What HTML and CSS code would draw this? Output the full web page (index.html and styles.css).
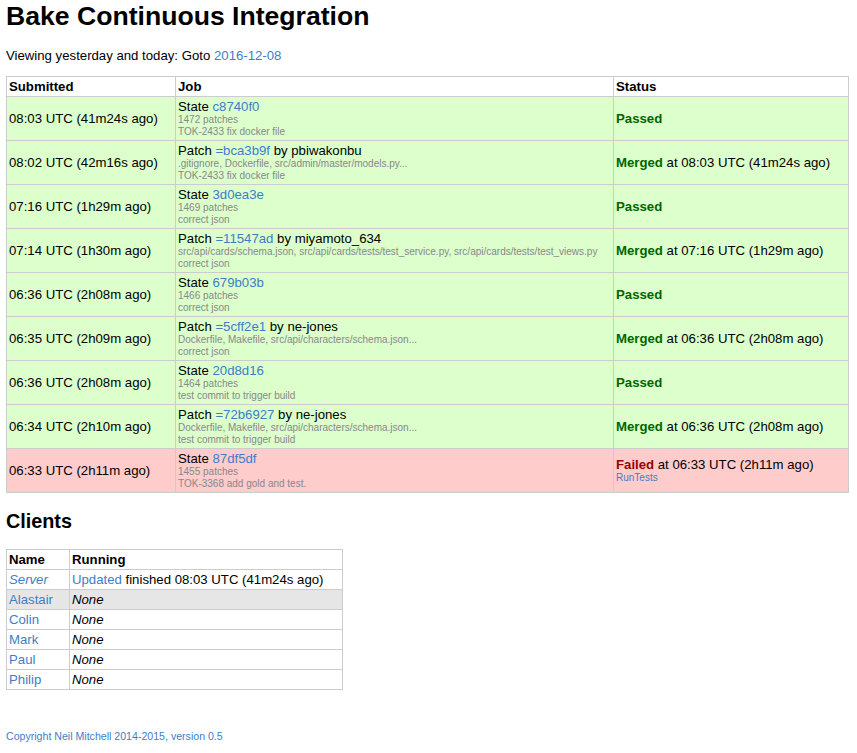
FILE: index.html
```html
<!DOCTYPE html>
<html>
<head>
<meta charset="utf-8">
<title>Bake Continuous Integration</title>
<link rel="stylesheet" href="styles.css">
</head>
<body>
<h1 class="title">Bake Continuous Integration</h1>
<p class="nav">Viewing yesterday and today: Goto <a href="#">2016-12-08</a></p>
<table class="grid builds">
  <colgroup>
    <col class="c-sub">
    <col class="c-job">
    <col class="c-status">
  </colgroup>
  <thead>
    <tr><th>Submitted</th><th>Job</th><th>Status</th></tr>
  </thead>
  <tbody>
    <tr class="pass">
      <td class="mid">08:03 UTC (41m24s ago)</td>
      <td>State <a href="#">c8740f0</a><div class="small">1472 patches</div><div class="small">TOK-2433 fix docker file</div></td>
      <td class="mid"><span class="ok">Passed</span></td>
    </tr>
    <tr class="pass">
      <td class="mid">08:02 UTC (42m16s ago)</td>
      <td>Patch <a href="#">=bca3b9f</a> by pbiwakonbu<div class="small">.gitignore, Dockerfile, src/admin/master/models.py...</div><div class="small">TOK-2433 fix docker file</div></td>
      <td class="mid"><span class="ok">Merged</span> at 08:03 UTC (41m24s ago)</td>
    </tr>
    <tr class="pass">
      <td class="mid">07:16 UTC (1h29m ago)</td>
      <td>State <a href="#">3d0ea3e</a><div class="small">1469 patches</div><div class="small">correct json</div></td>
      <td class="mid"><span class="ok">Passed</span></td>
    </tr>
    <tr class="pass">
      <td class="mid">07:14 UTC (1h30m ago)</td>
      <td>Patch <a href="#">=11547ad</a> by miyamoto_634<div class="small">src/api/cards/schema.json, src/api/cards/tests/test_service.py, src/api/cards/tests/test_views.py</div><div class="small">correct json</div></td>
      <td class="mid"><span class="ok">Merged</span> at 07:16 UTC (1h29m ago)</td>
    </tr>
    <tr class="pass">
      <td class="mid">06:36 UTC (2h08m ago)</td>
      <td>State <a href="#">679b03b</a><div class="small">1466 patches</div><div class="small">correct json</div></td>
      <td class="mid"><span class="ok">Passed</span></td>
    </tr>
    <tr class="pass">
      <td class="mid">06:35 UTC (2h09m ago)</td>
      <td>Patch <a href="#">=5cff2e1</a> by ne-jones<div class="small">Dockerfile, Makefile, src/api/characters/schema.json...</div><div class="small">correct json</div></td>
      <td class="mid"><span class="ok">Merged</span> at 06:36 UTC (2h08m ago)</td>
    </tr>
    <tr class="pass">
      <td class="mid">06:36 UTC (2h08m ago)</td>
      <td>State <a href="#">20d8d16</a><div class="small">1464 patches</div><div class="small">test commit to trigger build</div></td>
      <td class="mid"><span class="ok">Passed</span></td>
    </tr>
    <tr class="pass">
      <td class="mid">06:34 UTC (2h10m ago)</td>
      <td>Patch <a href="#">=72b6927</a> by ne-jones<div class="small">Dockerfile, Makefile, src/api/characters/schema.json...</div><div class="small">test commit to trigger build</div></td>
      <td class="mid"><span class="ok">Merged</span> at 06:36 UTC (2h08m ago)</td>
    </tr>
    <tr class="fail">
      <td class="mid">06:33 UTC (2h11m ago)</td>
      <td>State <a href="#">87df5df</a><div class="small">1455 patches</div><div class="small">TOK-3368 add gold and test.</div></td>
      <td class="mid"><span class="bad">Failed</span> at 06:33 UTC (2h11m ago)<div class="small"><a href="#">RunTests</a></div></td>
    </tr>
  </tbody>
</table>

<h2 class="section">Clients</h2>
<table class="grid clients">
  <colgroup>
    <col class="c-name">
    <col class="c-run">
  </colgroup>
  <thead>
    <tr><th>Name</th><th>Running</th></tr>
  </thead>
  <tbody>
    <tr><td><a href="#" class="it">Server</a></td><td><a href="#">Updated</a> finished 08:03 UTC (41m24s ago)</td></tr>
    <tr class="hl"><td><a href="#">Alastair</a></td><td class="it">None</td></tr>
    <tr><td><a href="#">Colin</a></td><td class="it">None</td></tr>
    <tr><td><a href="#">Mark</a></td><td class="it">None</td></tr>
    <tr><td><a href="#">Paul</a></td><td class="it">None</td></tr>
    <tr><td><a href="#">Philip</a></td><td class="it">None</td></tr>
  </tbody>
</table>

<p class="footer"><a href="#">Copyright Neil Mitchell 2014-2015, version 0.5</a></p>
</body>
</html>
```

FILE: styles.css
```css
html, body {
  margin: 0;
  padding: 0;
}
body {
  padding: 0 8px 0 6px;
  font-family: "Liberation Sans", Arial, Helvetica, sans-serif;
  font-size: 13.2px;
  color: #000;
  background: #fff;
}
a {
  color: #3f7dc8;
  text-decoration: none;
}
.title {
  font-size: 26.6px;
  line-height: 30px;
  font-weight: bold;
  margin: 1px 0 17px 0;
}
.nav {
  line-height: 15px;
  margin: 13px 0 13px 0;
}
.grid {
  border-collapse: collapse;
  table-layout: fixed;
}
.grid th,
.grid td {
  border: 1px solid #cccccc;
  padding: 2px 2px;
  text-align: left;
  vertical-align: top;
  line-height: 15px;
}
.grid th {
  font-weight: bold;
  background: #fff;
}
.builds {
  width: 842px;
}
.c-sub { width: 169px; }
.c-job { width: 438px; }
.c-status { width: 235px; }
.grid td.mid {
  vertical-align: middle;
}
.pass td {
  background: #dcffcc;
}
.fail td {
  background: #ffcccc;
}
.small {
  font-size: 10px;
  line-height: 12px;
  color: #888888;
  white-space: nowrap;
}
.ok {
  font-weight: bold;
  color: #006600;
}
.bad {
  font-weight: bold;
  color: #990000;
}
.section {
  font-size: 19.8px;
  line-height: 22px;
  font-weight: bold;
  margin: 17px 0 17px 0;
}
.clients {
  width: 336px;
}
.c-name { width: 63px; }
.c-run { width: 273px; }
.it {
  font-style: italic;
}
.hl td {
  background: #e6e6e6;
}
.footer {
  font-size: 10.6px;
  line-height: 12px;
  margin: 40px 0 0 0;
}
```
